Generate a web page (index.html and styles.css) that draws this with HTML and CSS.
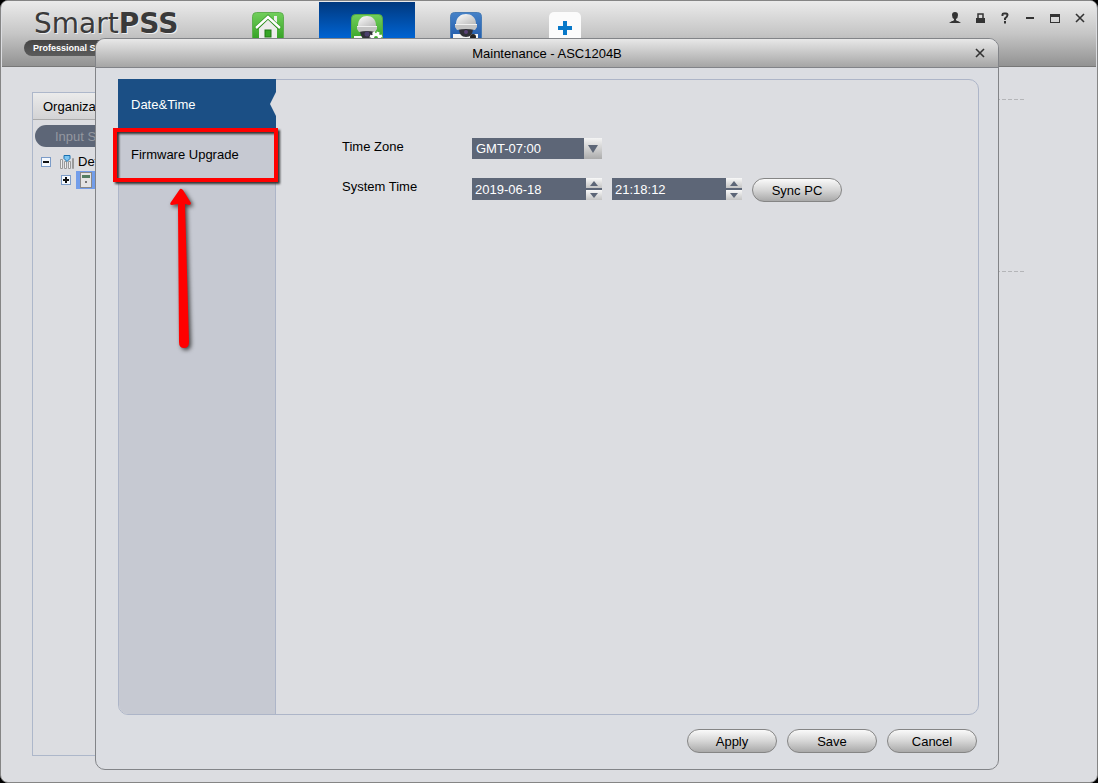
FILE: index.html
```
<!DOCTYPE html>
<html lang="en">
<head>
<meta charset="utf-8">
<title>SmartPSS</title>
<link rel="stylesheet" href="styles.css">
</head>
<body>
<div class="app">
  <header class="topbar">
    <div class="brand">
      <div class="logo">Smart<b>PSS</b></div>
      <div class="edition">Professional S</div>
    </div>
    <nav class="tabs">
      <button class="tab" aria-label="Home">
        <svg class="tab-icon home-icon" viewBox="0 0 32 32">
          <defs><linearGradient id="green" x1="0" y1="0" x2="0" y2="1"><stop offset="0" stop-color="#72cf5c"/><stop offset="1" stop-color="#2a9a1c"/></linearGradient></defs>
          <rect x="0.5" y="0.5" width="31" height="31" rx="4" fill="url(#green)" stroke="#5fae50"/>
          <path d="M22 4h3v9h-3z" fill="#eee"/>
          <path d="M7 16L16 7l9 9v14H7z" fill="#ececec"/>
          <path d="M4 16.500L16 5l12 11.500" fill="none" stroke="#2f8f22" stroke-width="4"/>
          <path d="M4 16L16 5l12 11" fill="none" stroke="#fff" stroke-width="2.400"/>
          <rect x="13" y="18" width="6" height="7" fill="#35a526" stroke="#1e7812"/>
        </svg>
      </button>
      <button class="tab tab-active" aria-label="Devices">
        <svg class="tab-icon device-icon" viewBox="0 0 32 32">
          <defs><linearGradient id="dome" x1="0" y1="0" x2="1" y2="1"><stop offset="0" stop-color="#fff"/><stop offset="1" stop-color="#b9b9b9"/></linearGradient></defs>
          <rect x="0.5" y="0.5" width="31" height="31" rx="4" fill="url(#green)" stroke="#55a845"/>
          <path d="M3 22h8v8H3z" fill="#f4f4f4"/>
          <path d="M9 16h14q0 9-7 9t-7-9z" fill="#303038"/>
          <circle cx="16" cy="20" r="2.500" fill="#4a3f6c"/>
          <path d="M7 12C7 5 11 2 16 2s9 3 9 10z" fill="url(#dome)"/>
          <path d="M6 12h20v3l-2 3q-8-2-16 0l-2-3z" fill="#c4c4c4"/>
          <path d="M6 12.500h20" stroke="#f0f0f0"/>
          <circle cx="25" cy="24" r="3.500" fill="none" stroke="#fff" stroke-width="3"/>
          <circle cx="25" cy="24" r="5" fill="none" stroke="#fff" stroke-width="3" stroke-dasharray="2.500 1.430"/>
        </svg>
      </button>
      <button class="tab" aria-label="Device configuration">
        <svg class="tab-icon config-icon" viewBox="0 0 32 32">
          <defs><linearGradient id="blue" x1="0" y1="0" x2="0" y2="1"><stop offset="0" stop-color="#4682c8"/><stop offset="1" stop-color="#1d55a5"/></linearGradient></defs>
          <rect x="0.500" y="0.500" width="31" height="31" rx="4" fill="url(#blue)" stroke="#497cb5"/>
          <path d="M3 22h25v8H3z" fill="#f4f4f4"/>
          <circle cx="23" cy="25" r="3" fill="#222"/>
          <path d="M9 16h14q0 9-7 9t-7-9z" fill="#303038"/>
          <circle cx="16" cy="20" r="2" fill="#594277"/>
          <path d="M6 12C6 5 11 2 16 2s10 3 10 10z" fill="url(#dome)"/>
          <path d="M5 12h22v3l-2 3q-9-2-18 0l-2-3z" fill="#c4c4c4"/>
          <path d="M5 12.500h22" stroke="#f0f0f0"/>
        </svg>
      </button>
      <button class="tab" aria-label="Add">
        <svg class="tab-icon add-icon" viewBox="0 0 32 32">
          <rect width="32" height="32" rx="5" fill="#fbfbfb"/>
          <path d="M14 9h4v5h5v4h-5v5h-4v-5H9v-4h5z" fill="#0878c8"/>
        </svg>
      </button>
    </nav>
    <div class="window-tools">
      <button class="tool" aria-label="User"><svg viewBox="0 0 14 14"><path d="M7 1a3 3 0 0 1 3 3q0 3-2 4v1l1 1h1l3 2H1l3-2h1l1-1V8Q4 7 4 4a3 3 0 0 1 3-3z" fill="#333"/></svg></button>
      <button class="tool" aria-label="Lock"><svg viewBox="0 0 14 14"><path d="M3 7h9v5H3z" fill="#333"/><path d="M5 7V3h5v4" fill="none" stroke="#333" stroke-width="1.500"/></svg></button>
      <button class="tool" aria-label="Help"><svg viewBox="0 0 14 14"><path d="M4.500 5V3.500Q4.500 2.500 6 2.500H8Q9.500 2.500 9.500 4T7 7.500V9M7 10v2.500" fill="none" stroke="#333" stroke-width="2"/></svg></button>
      <button class="tool" aria-label="Minimize"><svg viewBox="0 0 14 14"><path d="M3 6h8v2H3z" fill="#333"/></svg></button>
      <button class="tool" aria-label="Maximize"><svg viewBox="0 0 14 14"><path d="M2 3h10v9H2z M3 6v5h8V6z" fill="#333" fill-rule="evenodd"/></svg></button>
      <button class="tool" aria-label="Close"><svg viewBox="0 0 14 14"><path d="M3 3l8 8M11 3l-8 8" stroke="#333" stroke-width="1.600"/></svg></button>
    </div>
  </header>
  <main class="workspace">
    <aside class="organization">
      <div class="org-title">Organiza</div>
      <input class="org-search" type="text" placeholder="Input S" aria-label="Search">
      <ul class="tree">
        <li class="tree-row">
          <svg class="toggle" viewBox="0 0 10 10"><rect x="0.500" y="0.500" width="9" height="9" fill="#f4f8fd" stroke="#7c9cc8"/><path d="M2 4h6v2H2z" fill="#111"/></svg>
          <svg class="group-icon" viewBox="0 0 16 16"><path d="M1.500 5.500h2v9h-2zM5.500 7.500h2v7h-2zM9.500 7.500h2v7h-2zM13.500 4.500h1v10h-1z" fill="#eee" stroke="#999"/><path d="M5 1.500h6v3L8 7.500l-3-3z" fill="#7cc4f0" stroke="#1870b0"/></svg>
          <span>Def</span>
        </li>
        <li class="tree-row tree-child">
          <svg class="toggle" viewBox="0 0 10 10"><rect x="0.500" y="0.500" width="9" height="9" fill="#f4f8fd" stroke="#7c9cc8"/><path d="M4 2h2v2h2v2H6v2H4V6H2V4h2z" fill="#111"/></svg>
          <span class="tree-selected"><svg class="controller-icon" viewBox="0 0 12 16"><rect x="0.500" y="0.500" width="11" height="15" fill="#e4e4e4" stroke="#888"/><path d="M2 3h8v3H2z" fill="#527d62"/><path d="M5 9h2v2H5z" fill="#777"/></svg></span>
        </li>
      </ul>
    </aside>
    <section class="details">
      <div class="dashes"></div>
      <div class="dashes"></div>
    </section>
  </main>
</div>

<div class="dialog" role="dialog" aria-labelledby="dialog-title">
  <header class="dialog-bar">
    <span class="dialog-title" id="dialog-title">Maintenance - ASC1204B</span>
    <button class="tool dialog-close" aria-label="Close dialog"><svg viewBox="0 0 14 14"><path d="M3 3l8 8M11 3l-8 8" stroke="#333" stroke-width="1.600"/></svg></button>
  </header>
  <div class="dialog-body">
    <div class="panel">
      <nav class="side">
        <a class="side-item side-current" href="#date">Date&amp;Time
          <svg class="notch" viewBox="0 0 6 24"><path d="M6 0v24L0 12z" fill="#dcdde1"/></svg>
        </a>
        <a class="side-item" href="#firmware">Firmware Upgrade</a>
        <div class="callout"></div>
        <svg class="arrow" viewBox="0 0 36 172"><path d="M13 1Q14 0 16 2L24 15Q24 17 22 17L18 16L22 154Q22 160 17 160Q12 160 12 154L11 16L5 17Q2 17 4 14Z" fill="#f00"/></svg>
      </nav>
      <form class="form">
        <label for="zone">Time Zone</label>
        <div class="controls">
          <div class="select-box">
            <select id="zone"><option>GMT-07:00</option></select>
            <span class="select-arrow"><svg viewBox="0 0 10 8"><path d="M0 0h10L5 8z" fill="#5d6677"/></svg></span>
          </div>
        </div>
        <label for="date">System Time</label>
        <div class="controls">
          <div class="spinner">
            <input id="date" type="text" value="2019-06-18">
            <div class="steps">
              <button type="button" aria-label="Next date"><svg viewBox="0 0 8 5"><path d="M4 0l4 5H0z" fill="#5d6677"/></svg></button>
              <button type="button" aria-label="Previous date"><svg viewBox="0 0 8 5"><path d="M0 0h8L4 5z" fill="#5d6677"/></svg></button>
            </div>
          </div>
          <div class="spinner">
            <input type="text" value="21:18:12" aria-label="Time">
            <div class="steps">
              <button type="button" aria-label="Later"><svg viewBox="0 0 8 5"><path d="M4 0l4 5H0z" fill="#5d6677"/></svg></button>
              <button type="button" aria-label="Earlier"><svg viewBox="0 0 8 5"><path d="M0 0h8L4 5z" fill="#5d6677"/></svg></button>
            </div>
          </div>
          <button class="pill" type="button">Sync PC</button>
        </div>
      </form>
    </div>
    <footer class="actions">
      <button class="pill">Apply</button>
      <button class="pill">Save</button>
      <button class="pill">Cancel</button>
    </footer>
  </div>
</div>
</body>
</html>
```
FILE: styles.css
```
* { box-sizing: border-box; }

body {
  margin: 0;
  height: 100vh;
  position: relative;
  overflow: hidden;
  background: #000;
  color: #000;
  font: 13px/16px "Liberation Sans", Arial, sans-serif;
}

button, input, select { font: inherit; margin: 0; border: 0; padding: 0; }
svg { display: block; }

.app {
  height: 100%;
  display: flex;
  flex-direction: column;
  overflow: hidden;
  border: 1px solid #858585;
  border-radius: 8px;
  background: #dcdde1;
}

.topbar {
  display: flex;
  justify-content: space-between;
  height: 66px;
  flex: none;
  margin: 0 1px;
  padding-top: 1px;
  border-bottom: 1px solid #777;
  background: linear-gradient(#ebebeb, #c6c6c6 50%, #929292);
}

.brand { width: 218px; padding: 7px 0 0 22px; }
.logo {
  padding-left: 10px;
  color: #3a3a3a;
  font: 28px/30px "DejaVu Sans", Verdana, sans-serif;
  text-shadow: 1px 1px 0 #eee;
}
.edition {
  width: 150px;
  height: 16px;
  margin-top: 1px;
  padding-left: 9px;
  border-radius: 8px;
  background: linear-gradient(#454545, #5c5c5c);
  color: #fff;
  font-size: 9px;
  font-weight: bold;
}

.tabs { display: flex; gap: 3px; flex: 1; }
.tab {
  width: 96px;
  height: 56px;
  padding-top: 10px;
  display: flex;
  justify-content: center;
  align-items: flex-start;
  background: none;
}
.tab-active { padding-top: 12px; background: linear-gradient(#00387e, #006be0 75%); }
.tab-icon { width: 32px; height: 32px; }

.window-tools { display: flex; gap: 11px; padding: 9px 9px 0 0; align-items: flex-start; }
.tool { width: 14px; height: 14px; background: none; }
.tool svg { width: 14px; height: 14px; }

.workspace { flex: 1; display: flex; padding: 25px 71px 26px 31px; }
.organization { width: 220px; border: 1px solid #adb7ca; }
.org-title {
  height: 27px;
  padding: 6px 10px 4px;
  border-bottom: 1px solid #aaa;
  background: linear-gradient(#ebebeb, #d3d3d5);
}
.org-search {
  display: block;
  width: 210px;
  height: 22px;
  margin: 5px 2px 6px;
  padding-left: 20px;
  border-radius: 11px;
  background: #5d6677;
}
.org-search::placeholder { color: #9498a0; opacity: 1; }
.tree { margin: 0; padding: 0 0 0 8px; list-style: none; }
.tree-row { display: flex; align-items: center; height: 18px; }
.toggle { width: 10px; height: 10px; margin-right: 8px; }
.group-icon { width: 16px; height: 16px; margin-right: 3px; }
.tree-child { padding-left: 20px; }
.tree-child .toggle { margin-right: 5px; }
.tree-selected { width: 100px; height: 18px; padding: 1px 4px; background: #729dea; }
.controller-icon { width: 12px; height: 16px; }
.details { flex: 1; padding-top: 7px; }
.dashes {
  height: 1px;
  margin-bottom: 171px;
  background: repeating-linear-gradient(90deg, #b4b5b8 0 4px, transparent 4px 6px);
}

.dialog {
  position: absolute;
  inset: 38px 99px 13px 95px;
  display: flex;
  flex-direction: column;
  overflow: hidden;
  border: 1px solid #828488;
  border-radius: 10px;
  background: #dbdde2;
}
.dialog-bar {
  display: flex;
  align-items: center;
  height: 29px;
  flex: none;
  padding: 0 11px 0 25px;
  border-bottom: 1px solid #818388;
  background: linear-gradient(#e8e8e8, #a5a5a5);
}
.dialog-title { flex: 1; padding-top: 2px; text-align: center; }
.dialog-body { flex: 1; display: flex; flex-direction: column; padding: 11px 19px 16px 22px; }
.panel {
  flex: 1;
  display: flex;
  border: 1px solid #adb5c8;
  border-radius: 0 10px 10px 10px;
  background: #dcdde1;
}
.side {
  position: relative;
  width: 157px;
  border-right: 1px solid #adb5c8;
  border-radius: 0 0 0 9px;
  background: #c6c9d2;
}
.side-item {
  position: relative;
  display: flex;
  align-items: center;
  height: 50px;
  padding: 2px 0 0 12px;
  color: #000;
  text-decoration: none;
}
.side-current { margin: -1px -1px 0; padding-left: 13px; background: #1b4f85; color: #fff; }
.notch { position: absolute; right: 0; top: 13px; width: 6px; height: 24px; }
.callout {
  position: absolute;
  left: -6px;
  top: 48px;
  width: 165px;
  height: 54px;
  border: 4px solid #f00;
  filter: drop-shadow(2px 2px 1px #333);
}
.arrow {
  position: absolute;
  left: 48px;
  top: 108px;
  width: 36px;
  height: 172px;
  filter: drop-shadow(2px 2px 2px #444);
}

.form {
  flex: 1;
  display: grid;
  grid-template-columns: 130px 1fr;
  grid-auto-rows: 24px;
  row-gap: 16px;
  align-content: start;
  padding: 58px 20px 20px 66px;
}
.form label { padding-top: 1px; }
.controls { display: flex; align-items: flex-start; gap: 10px; }
.select-box, .spinner { display: flex; width: 130px; height: 22px; }
.select-box { position: relative; height: 21px; }
.select-box select {
  width: 100%;
  padding-left: 4px;
  appearance: none;
  border-radius: 0;
  background: #5d6677;
  color: #fff;
}
.select-arrow {
  position: absolute;
  right: 0;
  top: 0;
  width: 18px;
  height: 21px;
  padding: 7px 4px;
  background: linear-gradient(#f4f4f4, #acacac);
  pointer-events: none;
}
.select-arrow svg { width: 10px; height: 8px; }
.spinner input {
  flex: 1;
  min-width: 0;
  padding: 2px 0 0 3px;
  border-radius: 0;
  background: #5d6677;
  color: #fff;
}
.steps { display: flex; flex-direction: column; gap: 2px; width: 16px; background: #5d6677; }
.steps button {
  flex: 1;
  display: flex;
  align-items: center;
  justify-content: center;
  background: linear-gradient(#f8f8f8, #c4c4c4);
}
.steps svg { width: 8px; height: 5px; }

.pill {
  width: 90px;
  height: 24px;
  padding-top: 2px;
  border: 1px solid #858585;
  border-radius: 12px;
  background: linear-gradient(#fafafa, #d6d6d6 50%, #a9a9a9);
  color: #000;
}
.actions { display: flex; justify-content: flex-end; gap: 10px; padding: 14px 2px 0 0; }
```
